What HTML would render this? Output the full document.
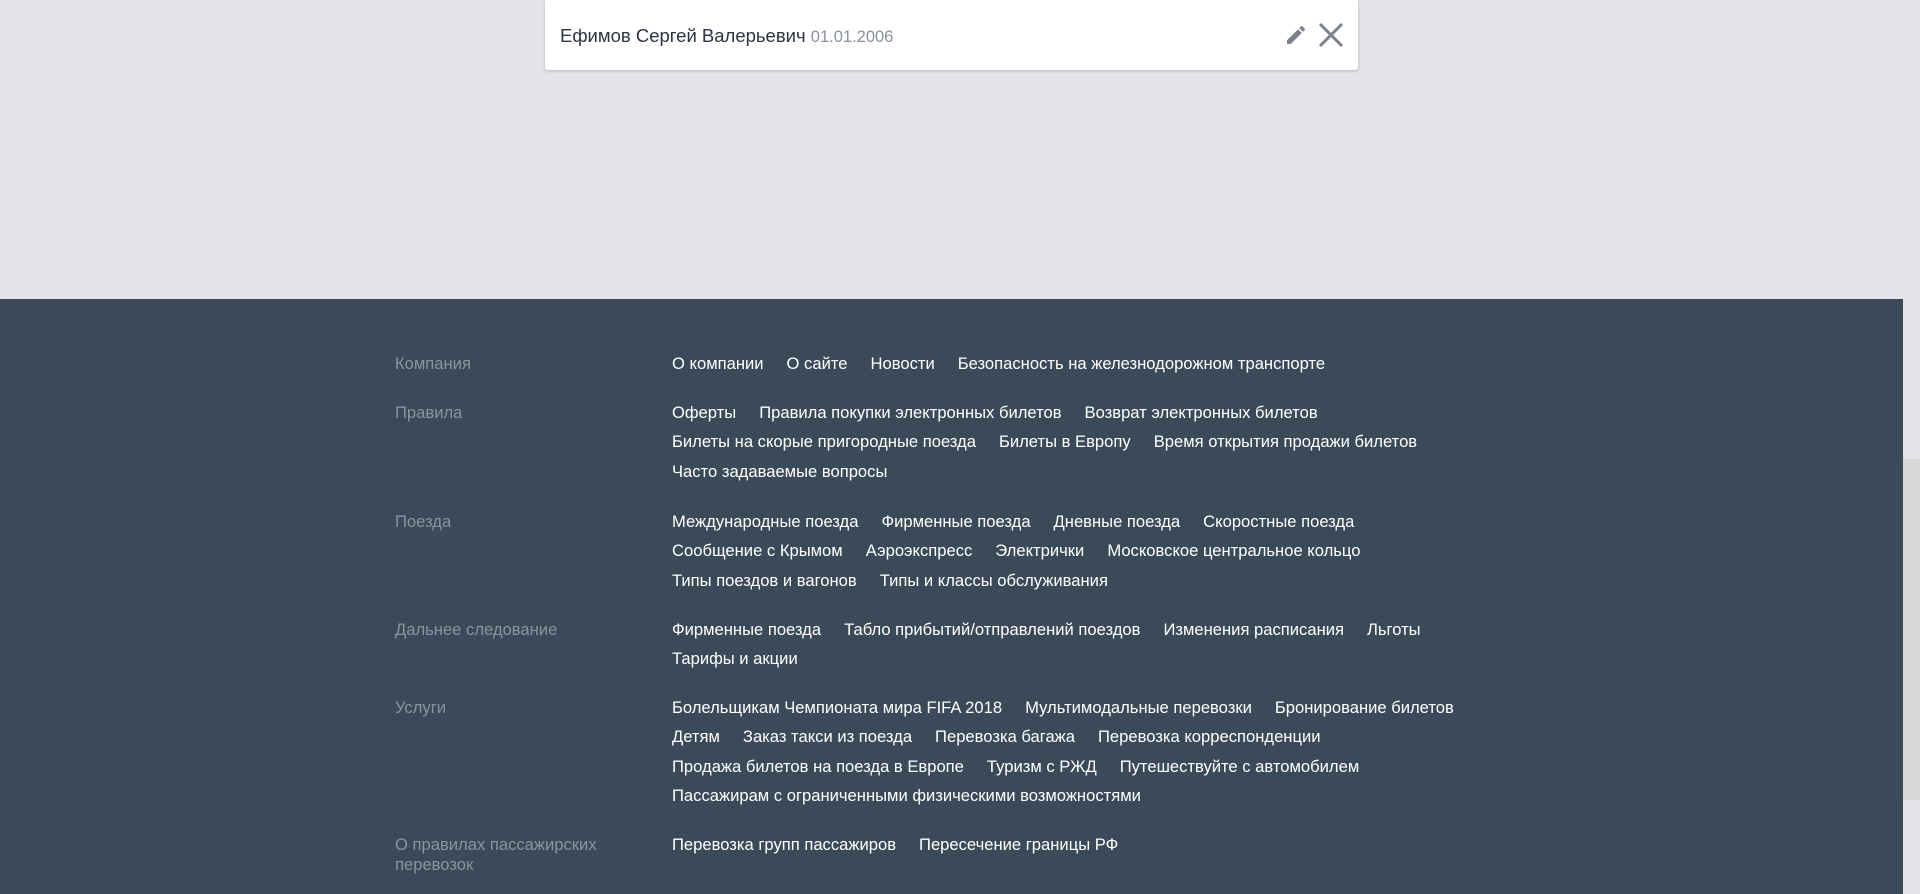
<!DOCTYPE html>
<html><head><meta charset="utf-8"><style>
body{margin:0;width:1920px;height:894px;overflow:hidden;background:#e3e4e8;font-family:"Liberation Sans",sans-serif;position:relative}
.card{position:absolute;left:545px;top:0;width:813px;height:70px;background:#fff;border-radius:0 0 3px 3px;box-shadow:0 1px 3px rgba(0,0,0,.2)}
.name{position:absolute;left:15px;top:25px;font-size:18.5px;color:#2c3340}
.name span{color:#8a909c;font-size:16.5px}
.ic{position:absolute;top:23px}
footer{position:absolute;left:0;top:299px;width:1903px;height:595px;background:#3a4a58}
.sb{position:absolute;left:1903px;top:459px;width:17px;height:341px;background:#d8d8d8}
.g{position:absolute;left:395px;width:1500px;font-size:16.6px;line-height:29.4px}
.l{position:absolute;left:0;top:0;width:230px;color:#8a949e;line-height:20px;padding-top:5px}
.r{position:absolute;left:277px;top:0;color:#fff}
.r a{margin-right:23px;white-space:nowrap}
</style></head><body>
<div class="card"><div class="name">Ефимов Сергей Валерьевич <span>01.01.2006</span></div>
<svg class="ic" style="left:739px" width="24" height="24" viewBox="0 0 24 24"><path fill="#7d828e" d="M3 17.25V21h3.75L17.81 9.94l-3.75-3.75L3 17.25zM20.71 7.04a1 1 0 000-1.41l-2.34-2.34a1 1 0 00-1.41 0l-1.83 1.83 3.75 3.75 1.83-1.83z"/></svg>
<svg class="ic" style="left:773px" width="26" height="24" viewBox="0 0 26 24"><path stroke="#7d828e" stroke-width="3" d="M2 1L24 23M24 1L2 23"/></svg>
</div>
<footer></footer>
<div class="sb"></div>
<div class="g" style="top:349px"><div class="l">Компания</div><div class="r"><a>О компании</a><a>О сайте</a><a>Новости</a><a>Безопасность на железнодорожном транспорте</a></div></div>
<div class="g" style="top:398px"><div class="l">Правила</div><div class="r"><a>Оферты</a><a>Правила покупки электронных билетов</a><a>Возврат электронных билетов</a><br><a>Билеты на скорые пригородные поезда</a><a>Билеты в Европу</a><a>Время открытия продажи билетов</a><br><a>Часто задаваемые вопросы</a></div></div>
<div class="g" style="top:507px"><div class="l">Поезда</div><div class="r"><a>Международные поезда</a><a>Фирменные поезда</a><a>Дневные поезда</a><a>Скоростные поезда</a><br><a>Сообщение с Крымом</a><a>Аэроэкспресс</a><a>Электрички</a><a>Московское центральное кольцо</a><br><a>Типы поездов и вагонов</a><a>Типы и классы обслуживания</a></div></div>
<div class="g" style="top:615px"><div class="l">Дальнее следование</div><div class="r"><a>Фирменные поезда</a><a>Табло прибытий/отправлений поездов</a><a>Изменения расписания</a><a>Льготы</a><br><a>Тарифы и акции</a></div></div>
<div class="g" style="top:693px"><div class="l">Услуги</div><div class="r"><a>Болельщикам Чемпионата мира FIFA 2018</a><a>Мультимодальные перевозки</a><a>Бронирование билетов</a><br><a>Детям</a><a>Заказ такси из поезда</a><a>Перевозка багажа</a><a>Перевозка корреспонденции</a><br><a>Продажа билетов на поезда в Европе</a><a>Туризм с РЖД</a><a>Путешествуйте с автомобилем</a><br><a>Пассажирам с ограниченными физическими возможностями</a></div></div>
<div class="g" style="top:830px"><div class="l" style="width:220px">О правилах пассажирских перевозок</div><div class="r"><a>Перевозка групп пассажиров</a><a>Пересечение границы РФ</a></div></div>
</body></html>
